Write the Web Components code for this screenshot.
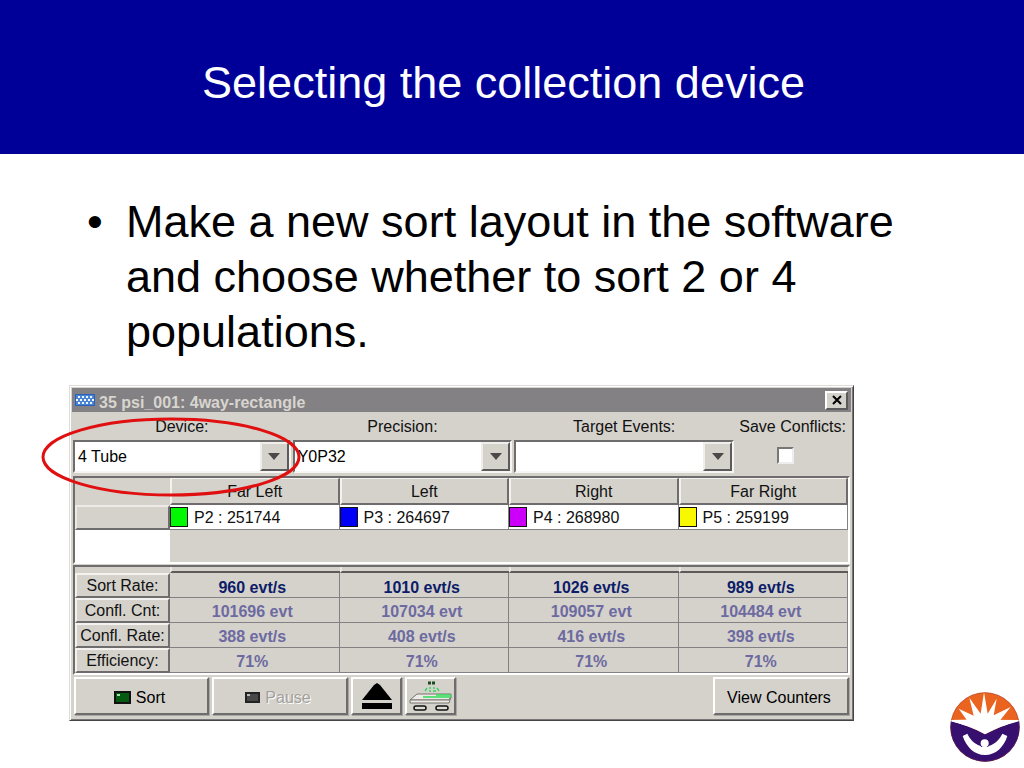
<!DOCTYPE html>
<html lang="en">
<head>
<meta charset="utf-8">
<title>Selecting the collection device</title>
<style>
  body { margin: 0; background: #fff; font-family: "Liberation Sans", Arial, sans-serif; }
</style>
</head>
<body>
<training-slide>
  <slide-title slot="title">Selecting the collection device</slide-title>
  <slide-bullet slot="body">Make a new sort layout in the software and choose whether to sort 2 or 4 populations.</slide-bullet>
  <sort-window slot="figure" caption="35 psi_001: 4way-rectangle"></sort-window>
  <brand-logo slot="logo"></brand-logo>
</training-slide>

<script>
const define = (name, html, setup) => {
  const template = document.createElement('template');
  template.innerHTML = html;
  customElements.define(name, class extends HTMLElement {
    connectedCallback() {
      if (this.shadowRoot) return;
      const root = this.attachShadow({ mode: 'open' });
      root.append(template.content.cloneNode(true));
      if (setup) setup(this, root);
    }
  });
};

define('training-slide', `
  <style>
    :host { display: flex; flex-direction: column; min-height: 100vh; color: #000; }
    main { padding-top: 40px; }
    .figure { display: flex; align-items: flex-end; gap: 96px; padding: 26px 4px 6px 69px; }
    .window { flex: 1; min-width: 0; padding-bottom: 41px; }
  </style>
  <slot name="title"></slot>
  <main>
    <slot name="body"></slot>
    <div class="figure">
      <div class="window"><slot name="figure"></slot></div>
      <slot name="logo"></slot>
    </div>
  </main>`);

define('slide-title', `
  <style>
    :host { display: block; background: #000099; color: #fff; }
    h1 { margin: 0; padding: 57px 17px 45px 0; font-size: 45px; line-height: 52px; font-weight: normal; text-align: center; }
  </style>
  <header><h1><slot></slot></h1></header>`);

define('slide-bullet', `
  <style>
    :host { display: block; padding: 0 75px 0 87px; font-size: 45px; line-height: 55px; }
    ul { margin: 0; padding: 0; list-style: none; }
    li { display: grid; grid-template-columns: 39px 1fr; }
    li::before { content: "•"; }
  </style>
  <ul><li><span><slot></slot></span></li></ul>`);

define('combo-field', `
  <style>
    :host { display: grid; grid-template-rows: 28px 33px; }
    label { text-align: center; line-height: 29px; }
    .box { display: grid; grid-template-columns: 1fr 29px; background: #fff; border: 2px solid; border-color: #6e6c6c #f6f5f2 #f6f5f2 #6e6c6c; }
    select { grid-area: 1 / 1 / 2 / 3; appearance: none; border: 0; background: none; font: inherit; color: #000; padding: 0 32px 0 3px; margin: 0; width: 100%; min-width: 0; border-radius: 0; }
    .arrow { grid-area: 1 / 2; display: grid; place-items: center; pointer-events: none; background: #d5d2cc; border: 2px solid; border-color: #efeeea #5c5a5a #5c5a5a #efeeea; }
  </style>
  <label for="choice"></label>
  <div class="box">
    <select id="choice"><option></option></select>
    <span class="arrow"><svg width="14" height="8" viewBox="0 0 14 8" aria-hidden="true"><path d="M1 0h12L7 7z" fill="#4a4848"/></svg></span>
  </div>`,
  (host, root) => {
    root.querySelector('label').textContent = host.getAttribute('label');
    root.querySelector('option').textContent = host.getAttribute('value') || '';
  });

define('raised-button', `
  <style>
    :host { display: flex; }
    button { flex: 1; display: flex; align-items: center; justify-content: center; gap: 5px; min-width: 0; margin: 0; padding: 0; font: inherit; color: #000; background: #d5d2cc; border: 2px solid; border-color: #fff #6e6c6c #6e6c6c #fff; box-shadow: 1px 1px 0 #aaa7a2; border-radius: 0; }
    :host([wide]) button { padding: 3px 4px 0 0; }
    button:disabled { color: #a3a09b; text-shadow: 1px 1px 0 #fff; }
  </style>
  <button type="button"><slot></slot></button>`,
  (host, root) => {
    const button = root.querySelector('button');
    button.disabled = host.hasAttribute('off');
    if (host.hasAttribute('name')) button.setAttribute('aria-label', host.getAttribute('name'));
  });

define('title-bar', `
  <style>
    :host { display: flex; align-items: center; height: 24px; padding: 0 3px; background: #838183; color: #d8d5d0; font-weight: bold; }
    .icon { width: 20px; height: 12px; margin: 0 4px 1px 0; }
    .caption { flex: 1; padding-top: 5px; line-height: 18px; white-space: nowrap; overflow: hidden; }
    button { display: grid; place-items: center; width: 23px; height: 19px; padding: 0; margin: 0; background: #d5d2cc; border: 2px solid; border-color: #fff #5c5a5a #5c5a5a #fff; border-radius: 0; }
  </style>
  <svg class="icon" viewBox="0 0 20 12" aria-hidden="true">
    <rect width="20" height="12" fill="#2a62b8"/><rect x="1" y="1" width="18" height="10" fill="#4a84d4"/>
    <g stroke="#f0f8ff" stroke-width="2" stroke-dasharray="2 2"><path d="M3 3h15M1 6h18M3 9h15"/></g>
  </svg>
  <span class="caption"><slot></slot></span>
  <button type="button" aria-label="Close"><svg width="12" height="10" viewBox="0 0 12 10"><path d="M2 1l8 8M10 1l-8 8" stroke="#000" stroke-width="2"/></svg></button>`);

const populations = [
  ['Far Left', '#00f800', 'P2 : 251744'], ['Left', '#0000f8', 'P3 : 264697'],
  ['Right', '#cc00f8', 'P4 : 268980'], ['Far Right', '#f8f800', 'P5 : 259199']
];
define('population-table', `
  <style>
    :host { display: block; height: 84px; border: 2px solid; border-color: #6e6c6c #fff #fff #6e6c6c; background: linear-gradient(90deg, #fff 95px, #d5d2cc 95px); }
    table { width: 100%; table-layout: fixed; border-collapse: separate; border-spacing: 0; }
    th, td { box-sizing: border-box; padding: 0; font-weight: normal; white-space: nowrap; }
    thead .lead, tbody .lead { width: 95px; background: #d5d2cc; }
    thead th { height: 27px; padding-top: 2px; background: #d5d2cc; border: solid; border-width: 1px 2px 2px 2px; border-color: #f4f2ee #6e6c6c #6e6c6c #f4f2ee; }
    tbody th, tbody td { height: 25px; }
    tbody th { border: 2px solid; border-color: #eceae6 #6e6c6c #6e6c6c #eceae6; }
    tbody td { background: #fff; border-bottom: 1px solid #838183; border-right: 1px solid #838183; }
    .cell { display: flex; align-items: center; gap: 6px; height: 24px; }
    .cell span { padding-top: 2px; }
    i { box-sizing: border-box; width: 18px; height: 20px; border: 1px solid #111; flex: none; }
  </style>
  <table>
    <thead><tr><td class="lead"></td>${populations.map(p => `<th scope="col">${p[0]}</th>`).join('')}</tr></thead>
    <tbody><tr><th class="lead"></th>${populations.map(p => `<td><div class="cell"><i style="background:${p[1]}"></i><span>${p[2]}</span></div></td>`).join('')}</tr></tbody>
  </table>`);

const counters = [
  ['Sort Rate:', '960 evt/s', '1010 evt/s', '1026 evt/s', '989 evt/s'],
  ['Confl. Cnt:', '101696 evt', '107034 evt', '109057 evt', '104484 evt'],
  ['Confl. Rate:', '388 evt/s', '408 evt/s', '416 evt/s', '398 evt/s'],
  ['Efficiency:', '71%', '71%', '71%', '71%']
];
define('counter-table', `
  <style>
    :host { display: block; border: 2px solid; border-color: #6e6c6c #fff #fff #6e6c6c; }
    table { width: 100%; table-layout: fixed; border-collapse: separate; border-spacing: 0; }
    th, td { box-sizing: border-box; padding: 0; line-height: 18px; white-space: nowrap; text-align: center; }
    thead td { height: 6px; line-height: 4px; }
    thead td + td { border-bottom: 2px solid #5c5a5a; border-left: 2px solid #eceae6; }
    .lead { width: 95px; }
    th, tbody td { height: 25px; }
    th { font-weight: normal; border: 2px solid; border-color: #f4f2ee #6e6c6c #6e6c6c #f4f2ee; }
    tbody td { font-weight: bold; color: #6c6aa0; border-right: 1px solid #838183; border-bottom: 1px solid #838183; padding: 3px 4px 0 0; }
    tbody tr:first-child td { color: #0c1c68; padding-top: 5px; }
  </style>
  <table>
    <thead><tr><td class="lead"></td><td></td><td></td><td></td><td></td></tr></thead>
    <tbody>${counters.map(([name, ...values]) => `<tr><th scope="row">${name}</th>${values.map(v => `<td>${v}</td>`).join('')}</tr>`).join('')}</tbody>
  </table>`);

define('sort-window', `
  <style>
    :host { display: block; position: relative; box-sizing: border-box; padding: 2px 2px 1px; background: #d5d2cc; border: 1px solid; border-color: #dedcd8 #444 #444 #dedcd8; box-shadow: inset 1px 1px #fff, inset -1px -1px #777; font-size: 16px; line-height: 20px; color: #111; }
    .fields { display: grid; grid-template-columns: 217fr 219fr 219fr 112px; gap: 2px; padding: 0 3px 3px 1px; }
    .save { display: grid; grid-template-rows: 28px 33px; justify-items: center; }
    .save label { line-height: 29px; white-space: nowrap; justify-self: end; padding-right: 2px; }
    input { appearance: none; box-sizing: border-box; width: 17px; height: 17px; margin: 7px 14px 0 0; background: #fff; border: 2px solid; border-color: #777 #eee #eee #777; }
    population-table, counter-table { margin: 0 1px 1px; }
    .actions { display: grid; grid-template-columns: 135px 136px 51px 51px 1fr 136px; gap: 3px; height: 38px; padding: 1px 2px 4px; }
    .view { grid-column: 6; }
    .ellipse { position: absolute; left: -29px; top: 31px; width: 260px; height: 80px; overflow: visible; pointer-events: none; }
  </style>
  <title-bar></title-bar>
  <div class="fields">
    <combo-field label="Device:" value="4 Tube"></combo-field>
    <combo-field label="Precision:" value="Y0P32"></combo-field>
    <combo-field label="Target Events:"></combo-field>
    <div class="save"><label for="save">Save Conflicts:</label><input id="save" type="checkbox"></div>
  </div>
  <population-table></population-table>
  <counter-table></counter-table>
  <div class="actions">
    <raised-button wide>
      <svg width="17" height="13" viewBox="0 0 17 13" aria-hidden="true"><rect width="17" height="13" fill="#111"/><rect x="2" y="2" width="13" height="9" fill="#075a12"/><path d="M3 3h3v2H3z" fill="#a8dca8"/></svg>
      Sort
    </raised-button>
    <raised-button wide off>
      <svg width="15" height="11" viewBox="0 0 15 11" aria-hidden="true"><rect width="15" height="11" fill="#222"/><rect x="2" y="2" width="11" height="7" fill="#484848"/><path d="M2 2h3v2H2z" fill="#bbb"/></svg>
      Pause
    </raised-button>
    <raised-button name="Eject">
      <svg width="32" height="28" viewBox="0 0 32 28"><path d="M16 1l3 2 12 15H1L13 3z" fill="#000"/><path d="M1 21h30v6H1z" fill="#000"/></svg>
    </raised-button>
    <raised-button name="Move tray">
      <svg width="46" height="32" viewBox="0 0 46 32">
        <path d="M20 3h3M24 3h3" stroke="#174b20" stroke-width="3"/>
        <path d="M19 8l-2 3M22 7v2M26 7v2M29 8l2 3M21 11h2M25 11h3" stroke="#35d45c" stroke-width="1.4"/>
        <path d="M2 20l7-6h34v3l-2 3z" fill="#eeeae8" stroke="#77756f"/>
        <path d="M2 20v3h39l2-6-2 3z" fill="#eeeae8" stroke="#77756f"/>
        <path d="M15 17h28M28 15h15" stroke="#2edb55" stroke-width="1.5"/>
        <rect x="6" y="26" width="12" height="4" rx="2" fill="#dedcd6" stroke="#111" stroke-width="1.5"/>
        <rect x="28" y="26" width="12" height="4" rx="2" fill="#dedcd6" stroke="#111" stroke-width="1.5"/>
      </svg>
    </raised-button>
    <raised-button wide class="view">View Counters</raised-button>
  </div>
  <svg class="ellipse" viewBox="0 0 260 80" aria-hidden="true"><ellipse cx="130" cy="40" rx="128" ry="38" fill="none" stroke="#e01010" stroke-width="3"/></svg>`,
  (host, root) => { root.querySelector('title-bar').textContent = host.getAttribute('caption'); });

define('brand-logo', `
  <style>
    :host { display: block; flex: none; }
    svg { display: block; }
  </style>
  <svg width="70" height="70" viewBox="6 7 210 210" role="img" aria-label="Sunburst emblem">
    <defs><clipPath id="disc"><circle cx="111" cy="112" r="104"/></clipPath></defs>
    <g clip-path="url(#disc)">
      <rect x="6" y="7" width="210" height="210" fill="#ea6420"/>
      <path d="M0 91L56 90L32 57L77 78L64 24L98 72L108 8L119 72L146 27L137 77L188 52L157 91L220 91V110H0z" fill="#fff"/>
      <path d="M0 93Q60 106 111 134Q162 106 220 93V220H0z" fill="#37106f"/>
      <path d="M0 91L111 90L220 91Q162 106 111 134Q60 106 0 93z" fill="#fff"/>
      <path d="M44 139L58 132C66 148 78 163 99 169L122 169C142 163 155 148 163 132L178 139C168 172 143 196 111 196C79 196 55 172 44 139z" fill="#fff"/>
      <circle cx="110" cy="161" r="15" fill="#37106f"/>
      <path d="M99 172h23v10H99z" fill="#fff"/>
      <circle cx="110" cy="161" r="12" fill="#fff"/>
    </g>
    <circle cx="111" cy="112" r="103" fill="none" stroke="#7a3050" stroke-width="1"/>
  </svg>`);
</script>
</body>
</html>
